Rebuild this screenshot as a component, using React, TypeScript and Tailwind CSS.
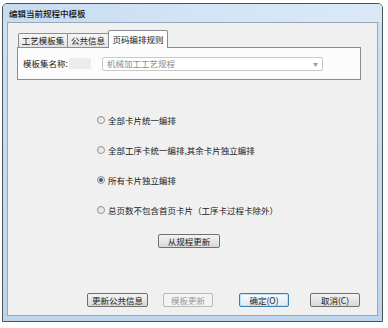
import { useState } from 'react';

const font = { fontFamily: '"Noto Sans CJK SC", "Liberation Sans", sans-serif' };

function Tab({ label, active, w }: { label: string; active?: boolean; w: string }) {
  if (active) {
    return (
      <div
        className={`${w} h-[18px] -mb-px relative z-10 flex items-center justify-center border border-b-0 border-[#898c95] rounded-t-[2px] bg-white text-[8.5px] text-[#1a1a1a]`}
      >
        {label}
      </div>
    );
  }
  return (
    <div
      className={`${w} h-[14px] flex items-center justify-center border border-b-0 border-[#898c95] -mr-px rounded-t-[2px] bg-gradient-to-b from-[#f6f6f6] to-[#e3e3e3] text-[8.5px] text-[#1a1a1a]`}
    >
      {label}
    </div>
  );
}

function Radio({ label, checked, onClick }: { label: string; checked?: boolean; onClick: () => void }) {
  return (
    <div className="flex items-center gap-[3px] h-[12px] cursor-default" onClick={onClick}>
      <div className="w-[8px] h-[8px] rounded-full border border-[#929292] bg-gradient-to-br from-[#dcdcdc] to-[#f8f8f8] flex items-center justify-center">
        {checked && <div className="w-[4px] h-[4px] rounded-full bg-[#2b5f9e]" />}
      </div>
      <span className="text-[8.5px] text-[#1a1a1a] leading-none">{label}</span>
    </div>
  );
}

function Btn({ label, cls, kind }: { label: string; cls: string; kind?: 'disabled' | 'focus' }) {
  const base = 'h-[14px] flex items-center justify-center rounded-[2px] border text-[8.5px] leading-none';
  if (kind === 'disabled') {
    return <div className={`${base} ${cls} border-[#b7babc] bg-[#f4f4f4] text-[#9a9a9a]`}>{label}</div>;
  }
  if (kind === 'focus') {
    return (
      <div
        className={`${base} ${cls} border-[#3c7fb1] bg-gradient-to-b from-[#f7fbfe] to-[#dde9f3] text-[#1a1a1a] shadow-[inset_0_0_0_1px_#bfe0f7]`}
      >
        {label}
      </div>
    );
  }
  return (
    <div className={`${base} ${cls} border-[#707070] bg-gradient-to-b from-[#f4f4f4] to-[#d8d8d8] text-[#1a1a1a]`}>
      {label}
    </div>
  );
}

export default function App() {
  const [mode, setMode] = useState(2);
  const options = [
    '全部卡片统一编排',
    '全部工序卡统一编排,其余卡片独立编排',
    '所有卡片独立编排',
    '总页数不包含首页卡片（工序卡过程卡除外）',
  ];

  return (
    <div className="w-[388px] h-[328px] bg-white pt-[3px] pl-[2px]" style={font}>
      {/* Window frame */}
      <div className="w-[381px] h-[319px] border border-[#4e5256] rounded-t-[5px] bg-gradient-to-b from-[#cfe1f3] to-[#bdd5ec] flex flex-col">
        {/* Title bar */}
        <div className="h-[18px] flex items-center pl-[6px] rounded-t-[4px] bg-gradient-to-r from-[#c6dcf1] via-[#d2e4f5] to-[#dbe9f7]">
          <span className="text-[8.5px] text-[#111] font-medium">编辑当前规程中模板</span>
        </div>

        {/* Client area */}
        <div className="ml-[4px] mr-[4px] mb-[5px] flex-1 border border-[#97a8ba] bg-[#f0f0f0] flex flex-col">
          {/* Tabs */}
          <div className="mt-[7px] ml-[9px] w-[344px]">
            <div className="flex items-end h-[17px] pl-[1px]">
              <Tab label="工艺模板集" w="w-[50px]" />
              <Tab label="公共信息" w="w-[42px]" />
              <Tab label="页码编排规则" w="w-[60px]" active />
            </div>
            <div className="h-[33px] border border-[#898c95] bg-[#fcfcfc] flex items-center pl-[5px]">
              <span className="text-[8.5px] text-[#1a1a1a] w-[46px]">模板集名称:</span>
              <div className="w-[22px] h-[11px] bg-[#ececec]" />
              <div className="ml-[11px] w-[221px] h-[14px] border border-[#c9c9c9] rounded-[2px] bg-white flex items-center pl-[4px] pr-[4px]">
                <span className="text-[8.5px] text-[#8c8c8c] flex-1">机械加工工艺规程</span>
                <span className="text-[5px] text-[#9a9a9a]">▼</span>
              </div>
            </div>
          </div>

          {/* Numbering options */}
          <div className="mt-[34px] ml-[89px] flex flex-col gap-[18px]">
            {options.map((o, i) => (
              <Radio key={o} label={o} checked={mode === i} onClick={() => setMode(i)} />
            ))}
          </div>

          <div className="mt-[18px] ml-[150px]">
            <Btn label="从规程更新" cls="w-[62px]" />
          </div>

          {/* Footer buttons */}
          <div className="mt-[45px] ml-[79px] flex">
            <Btn label="更新公共信息" cls="w-[61px]" />
            <Btn label="模板更新" cls="w-[50px] ml-[15px]" kind="disabled" />
            <Btn label="确定(O)" cls="w-[50px] ml-[26px]" kind="focus" />
            <Btn label="取消(C)" cls="w-[50px] ml-[21px]" />
          </div>
        </div>
      </div>
    </div>
  );
}
